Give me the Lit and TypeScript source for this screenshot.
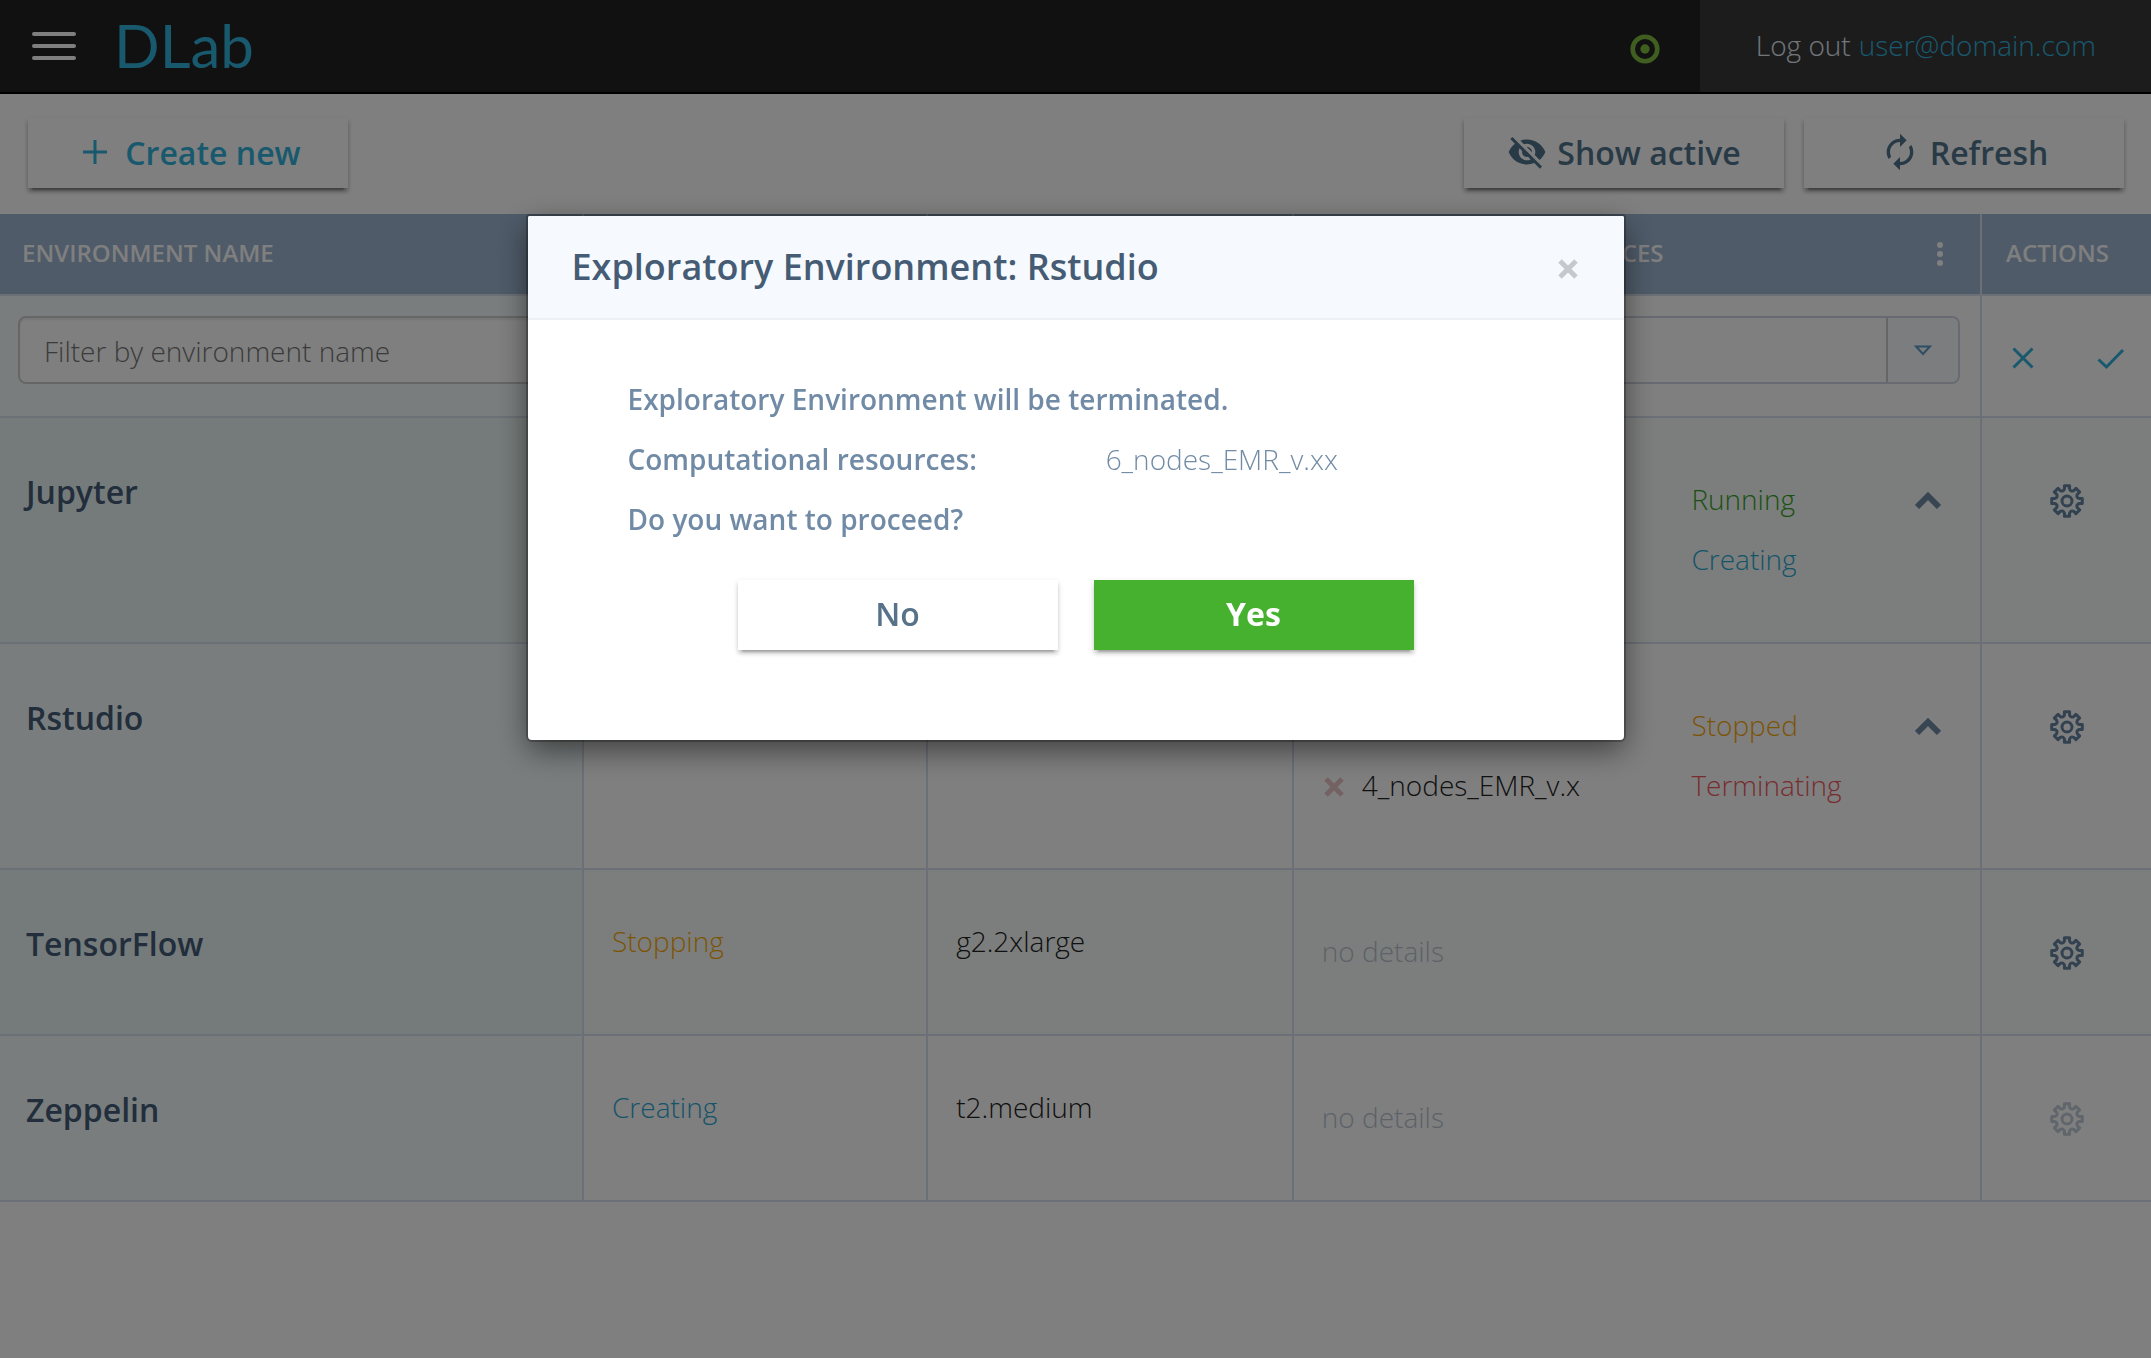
import { LitElement, html, css, svg, nothing } from "lit";
import { customElement, property } from "lit/decorators.js";
import { classMap } from "lit/directives/class-map.js";

type Status = "Running" | "Creating" | "Stopped" | "Stopping" | "Terminating";

interface Resource {
  name?: string;
  status: Status;
}

interface Environment {
  name: string;
  status?: Status;
  shape?: string;
  resources: Resource[];
  locked?: boolean;
}

const ENVIRONMENTS: Environment[] = [
  { name: "Jupyter", resources: [{ status: "Running" }, { status: "Creating" }] },
  {
    name: "Rstudio",
    resources: [{ status: "Stopped" }, { name: "4_nodes_EMR_v.x", status: "Terminating" }],
  },
  { name: "TensorFlow", status: "Stopping", shape: "g2.2xlarge", resources: [] },
  { name: "Zeppelin", status: "Creating", shape: "t2.medium", resources: [], locked: true },
];

/** Outline of an eight-toothed cog centred on the origin. */
function cogOutline(outer: number, inner: number): string {
  const at = (r: number, a: number) => `${(r * Math.cos(a)).toFixed(2)} ${(r * Math.sin(a)).toFixed(2)}`;
  const step = Math.PI / 4;
  let d = "";
  for (let k = 0; k < 8; k++) {
    const a = k * step;
    d += `${k ? "L" : "M"}${at(inner + 1, a - 0.2)}L${at(outer, a - 0.17)}L${at(outer, a + 0.17)}L${at(inner + 1, a + 0.2)}`;
    d += `Q${at(inner - 2, a + step / 2)} ${at(inner + 1, a + step - 0.2)}`;
  }
  return d + "Z";
}

const COG = cogOutline(15.5, 11.5);

const icons = {
  plus: svg`<path d="M12 0V24M0 12H24" fill="none" stroke="currentColor" stroke-width="3"/>`,
  eyeOff: svg`<path fill="currentColor" d="M12 7c2.76 0 5 2.24 5 5 0 .65-.13 1.26-.36 1.83l2.92 2.92c1.51-1.26 2.7-2.89 3.43-4.75-1.73-4.39-6-7.5-11-7.5-1.4 0-2.74.25-3.98.7l2.16 2.16C10.74 7.13 11.35 7 12 7zM2 4.27l2.28 2.28.46.46C3.08 8.3 1.78 10.02 1 12c1.73 4.39 6 7.5 11 7.5 1.55 0 3.03-.3 4.38-.84l.42.42L19.73 22 21 20.73 3.27 3 2 4.27zM7.53 9.8l1.55 1.55c-.05.21-.08.43-.08.65 0 1.66 1.34 3 3 3 .22 0 .44-.03.65-.08l1.55 1.55c-.67.33-1.41.53-2.2.53-2.76 0-5-2.24-5-5 0-.79.2-1.53.53-2.2zm4.31-.78l3.15 3.15.02-.16c0-1.66-1.34-3-3-3l-.17.01z"/>`,
  renew: svg`<path fill="currentColor" d="M12 6v3l4-4-4-4v3c-4.42 0-8 3.58-8 8 0 1.57.46 3.03 1.24 4.26L6.7 14.8c-.45-.83-.7-1.79-.7-2.8 0-3.31 2.69-6 6-6zm6.76 1.74L17.3 9.2c.44.84.7 1.79.7 2.8 0 3.31-2.69 6-6 6v-3l-4 4 4 4v-3c4.42 0 8-3.58 8-8 0-1.57-.46-3.03-1.24-4.26z"/>`,
};

@customElement("env-dialog")
export class EnvDialog extends LitElement {
  @property() environment = "";
  @property() resource = "";

  static styles = css`
    :host {
      display: block;
      box-sizing: border-box;
      width: 1096px;
      max-width: 92%;
      background: #fff;
      border-radius: 2px 2px 4px 4px;
      box-shadow: 0 0 0 2px rgba(0, 0, 0, 0.25), 0 10px 30px rgba(0, 0, 0, 0.5);
      color: #718ba6;
      font-size: 28px;
      line-height: 60px;
    }
    .head {
      display: flex;
      align-items: center;
      justify-content: space-between;
      padding: 26px 44px;
      background: #f6faff;
      border-bottom: 2px solid #edf1f6;
      border-radius: 2px 2px 0 0;
    }
    .title {
      margin: 0;
      font-size: 36px;
      font-weight: 600;
      line-height: 50px;
      color: #455c74;
    }
    .close {
      display: flex;
      padding: 4px 2px 0;
      border: 0;
      background: none;
      color: #c5c9cc;
    }
    .body {
      padding: 49px 96px 90px 100px;
    }
    .line {
      margin: 0;
      font-weight: 600;
    }
    .pair {
      display: grid;
      grid-template-columns: 17fr 15fr;
      margin: 0;
    }
    .term {
      font-weight: 600;
    }
    .value {
      margin: 0;
      font-weight: 300;
    }
    .choices {
      display: flex;
      justify-content: center;
      gap: 36px;
      padding: 31px 4px 0 0;
    }
    .choice {
      width: 320px;
      height: 70px;
      padding: 0 0 4px;
      border: 0;
      background: #fff;
      color: #577289;
      font: 600 32px "Open Sans", sans-serif;
      box-shadow: 0 6px 2px -4px rgba(0, 0, 0, 0.2), 0 4px 4px rgba(0, 0, 0, 0.14), 0 2px 6px rgba(0, 0, 0, 0.12);
    }
    .confirm {
      background: #45b12f;
      color: #fff;
      font-weight: 700;
    }
  `;

  render() {
    return html`
      <header class="head">
        <h2 class="title">Exploratory Environment: ${this.environment}</h2>
        <button class="close" aria-label="Close">
          <svg width="20" height="20" viewBox="0 0 20 20" aria-hidden="true">
            <path d="M2 2L18 18M18 2L2 18" stroke="currentColor" stroke-width="5" />
          </svg>
        </button>
      </header>
      <div class="body">
        <p class="line">Exploratory Environment will be terminated.</p>
        <dl class="pair">
          <dt class="term">Computational resources:</dt>
          <dd class="value">${this.resource}</dd>
        </dl>
        <p class="line">Do you want to proceed?</p>
        <div class="choices">
          <button class="choice">No</button>
          <button class="choice confirm">Yes</button>
        </div>
      </div>
    `;
  }
}

@customElement("env-table")
export class EnvTable extends LitElement {
  @property({ attribute: false }) environments: Environment[] = [];

  static styles = css`
    :host {
      display: block;
      font-size: 28px;
      font-weight: 300;
      line-height: 40px;
    }
    .grid {
      width: 100%;
      table-layout: fixed;
      border-collapse: separate;
      border-spacing: 0;
    }
    .c-name { width: 27.15%; }
    .c-status { width: 16%; }
    .c-shape { width: 17%; }
    .c-res { width: 32%; }
    .th,
    .td {
      box-sizing: border-box;
      border-right: 2px solid #d6e0ec;
      border-bottom: 2px solid #d6e0ec;
      text-align: left;
      vertical-align: top;
      padding: 0;
    }
    .th:last-child,
    .td:last-child {
      border-right: 0;
    }
    .th {
      padding: 19px 22px 21px;
      background: #9eb6d2;
      color: #fff;
      font-size: 24px;
      font-weight: 600;
    }
    .th:last-child {
      padding-left: 24px;
    }
    .split {
      display: flex;
      align-items: center;
      justify-content: space-between;
      white-space: nowrap;
    }
    .bare {
      display: flex;
      padding: 0;
      border: 0;
      background: none;
      color: inherit;
    }
    .menu {
      padding: 2px 14px 0 0;
    }
    .filter {
      padding: 20px 20px 32px 18px;
    }
    .first {
      background: #f2fafa;
    }
    .row:nth-child(odd) .td {
      background: #f9fdfa;
    }
    .row .name {
      background: #f2fafa;
    }
    .row:nth-child(odd) .name {
      background: #ebf6f4;
    }
    .box {
      box-sizing: border-box;
      width: 100%;
      height: 68px;
      padding: 2px 24px 0;
      border: 2px solid #ccc;
      border-radius: 8px;
      background: #fff;
      box-shadow: inset 0 2px 2px rgba(0, 0, 0, 0.08);
      color: #444;
      font: 300 28px "Open Sans", sans-serif;
    }
    .box::placeholder {
      color: #777;
      opacity: 1;
    }
    .pick {
      display: grid;
      grid-template-columns: 1fr 74px;
      align-items: stretch;
    }
    .select {
      grid-area: 1 / 1 / 2 / 3;
      appearance: none;
      border-color: #ced5e0;
      box-shadow: none;
    }
    .arrow {
      grid-area: 1 / 2 / 2 / 3;
      display: flex;
      align-items: center;
      justify-content: center;
      margin: 2px 2px 2px 0;
      border-left: 2px solid #ccc;
      border-radius: 0 6px 6px 0;
      background: #f6faff;
      color: #5b9cc9;
      pointer-events: none;
    }
    .apply {
      display: flex;
      justify-content: space-between;
      padding: 50px 26px 0 30px;
      color: #30b2dc;
    }
    .name {
      padding: 54px 24px 0 26px;
      color: #445c78;
      font-size: 32px;
      font-weight: 600;
      text-align: left;
    }
    .plain {
      padding: 51px 28px 0;
      color: #222;
    }
    .resources {
      padding: 51px 39px 53px 28px;
      line-height: 60px;
    }
    .res {
      display: grid;
      grid-template-columns: 40px 33fr 25fr;
      height: 60px;
      color: #222;
    }
    .mark {
      display: flex;
      align-items: center;
      padding-top: 4px;
      color: #e9c3c3;
    }
    .toggle {
      padding-top: 4px;
      color: #718ba6;
    }
    .empty {
      height: 60px;
      color: #b9c4d0;
    }
    .actions {
      padding-top: 65px;
      color: #6784a0;
    }
    .cog {
      margin: 0 auto;
    }
    .cog:disabled {
      opacity: 0.4;
    }
    .s-running { color: #35a326; }
    .s-creating { color: #2ba8d2; }
    .s-stopped,
    .s-stopping { color: #f8a90a; }
    .s-terminating { color: #ee5a60; }
  `;

  private status(status?: Status) {
    return status
      ? html`<span class=${classMap({ [`s-${status.toLowerCase()}`]: true })}>${status}</span>`
      : nothing;
  }

  private resource(item: Resource, index: number) {
    return html`
      <div class="res">
        <span class="mark">
          ${item.name
            ? html`<svg width="24" height="20" viewBox="0 0 24 20" aria-hidden="true">
                <path d="M4 2L20 18M20 2L4 18" stroke="currentColor" stroke-width="5" />
              </svg>`
            : nothing}
        </span>
        <span>${item.name ?? nothing}</span>
        <span class="split">
          ${this.status(item.status)}
          ${index === 0
            ? html`<button class="bare toggle" aria-label="Collapse resources">
                <svg width="26" height="18" viewBox="0 0 26 18" aria-hidden="true">
                  <path d="M2 15L13 4L24 15" fill="none" stroke="currentColor" stroke-width="6" />
                </svg>
              </button>`
            : nothing}
        </span>
      </div>
    `;
  }

  private row(env: Environment) {
    return html`
      <tr class="row">
        <th class="td name" scope="row">${env.name}</th>
        <td class="td plain">${this.status(env.status)}</td>
        <td class="td plain">${env.shape ?? nothing}</td>
        <td class="td resources">
          ${env.resources.length
            ? env.resources.map((item, i) => this.resource(item, i))
            : html`<div class="empty">no details</div>`}
        </td>
        <td class="td actions">
          <button class="bare cog" aria-label="Actions for ${env.name}" ?disabled=${env.locked}>
            <svg width="36" height="36" viewBox="-18 -18 36 36" aria-hidden="true">
              <path d=${COG} fill="none" stroke="currentColor" stroke-width="3" stroke-linejoin="round" />
              <circle r="5" fill="none" stroke="currentColor" stroke-width="3" />
            </svg>
          </button>
        </td>
      </tr>
    `;
  }

  render() {
    return html`
      <table class="grid">
        <colgroup>
          <col class="c-name" />
          <col class="c-status" />
          <col class="c-shape" />
          <col class="c-res" />
          <col />
        </colgroup>
        <thead>
          <tr>
            <th class="th" scope="col">ENVIRONMENT NAME</th>
            <td class="th"></td>
            <td class="th"></td>
            <th class="th" scope="col">
              <div class="split">
                COMPUTATIONAL RESOURCES
                <button class="bare menu" aria-label="Column menu">
                  <svg width="8" height="26" viewBox="0 0 8 26" fill="currentColor" aria-hidden="true">
                    <circle cx="4" cy="4" r="3" />
                    <circle cx="4" cy="13" r="3" />
                    <circle cx="4" cy="22" r="3" />
                  </svg>
                </button>
              </div>
            </th>
            <th class="th" scope="col">ACTIONS</th>
          </tr>
          <tr>
            <td class="td filter first">
              <input class="box" type="text" aria-label="Filter by environment name" placeholder="Filter by environment name" />
            </td>
            <td class="td"></td>
            <td class="td"></td>
            <td class="td filter">
              <div class="pick">
                <select class="box select" aria-label="Filter by resources"></select>
                <span class="arrow">
                  <svg width="18" height="12" viewBox="0 0 18 12" aria-hidden="true">
                    <path d="M2 2.5H16L9 10Z" fill="none" stroke="currentColor" stroke-width="2" />
                  </svg>
                </span>
              </div>
            </td>
            <td class="td">
              <div class="apply">
                <button class="bare" aria-label="Clear filter">
                  <svg width="22" height="24" viewBox="0 0 22 24" aria-hidden="true">
                    <path d="M1.5 2.5L20.5 21.5M20.5 2.5L1.5 21.5" stroke="currentColor" stroke-width="3" />
                  </svg>
                </button>
                <button class="bare" aria-label="Apply filter">
                  <svg width="28" height="24" viewBox="0 0 28 24" aria-hidden="true">
                    <path d="M1.5 13.5L9.5 21L26 4" fill="none" stroke="currentColor" stroke-width="3" />
                  </svg>
                </button>
              </div>
            </td>
          </tr>
        </thead>
        <tbody>
          ${this.environments.map((env) => this.row(env))}
        </tbody>
      </table>
    `;
  }
}

@customElement("app-root")
export class AppRoot extends LitElement {
  static styles = css`
    :host {
      display: block;
      min-height: 100vh;
      background: #fff;
      font-family: "Open Sans", sans-serif;
    }
    .bar {
      display: flex;
      align-items: stretch;
      height: 92px;
      background: #222;
      border-bottom: 2px solid #000;
      font-size: 28px;
      font-weight: 300;
    }
    .bare {
      display: flex;
      align-items: center;
      border: 0;
      background: none;
      color: #fff;
    }
    .burger {
      padding: 0 38px 0 32px;
    }
    .logo {
      color: #30b2dc;
      font-family: Lato, sans-serif;
      font-size: 60px;
      font-weight: 400;
      line-height: 90px;
    }
    .health {
      display: flex;
      align-items: center;
      margin-left: auto;
      padding: 6px 40px 0 0;
    }
    .account {
      display: flex;
      align-items: center;
      gap: 8px;
      padding: 0 55px 2px 56px;
      background: #393939;
      color: #e4ecf6;
    }
    .link {
      color: inherit;
      text-decoration: none;
    }
    .user {
      color: #30b2dc;
    }
    .tools {
      display: flex;
      gap: 20px;
      padding: 24px 27px 26px 28px;
    }
    .tool {
      display: flex;
      align-items: center;
      justify-content: center;
      gap: 10px;
      width: 320px;
      height: 70px;
      padding: 0 0 2px;
      border: 0;
      background: #fff;
      color: #52748e;
      font: 600 32px "Open Sans", sans-serif;
      box-shadow: 0 6px 2px -4px rgba(0, 0, 0, 0.3), 0 4px 4px rgba(0, 0, 0, 0.24), 0 2px 6px rgba(0, 0, 0, 0.12);
    }
    .create {
      gap: 18px;
      margin-right: auto;
      padding-left: 8px;
      color: #30b2dc;
    }
    .veil {
      position: fixed;
      inset: 0;
      display: flex;
      justify-content: center;
      align-items: flex-start;
      padding-top: 216px;
      background: rgba(0, 0, 0, 0.5);
    }
  `;

  render() {
    return html`
      <header class="bar">
        <button class="bare burger" aria-label="Menu">
          <svg width="44" height="28" viewBox="0 0 44 28" fill="currentColor" aria-hidden="true">
            <rect width="44" height="4" rx="2" />
            <rect y="12" width="44" height="4" rx="2" />
            <rect y="24" width="44" height="4" rx="2" />
          </svg>
        </button>
        <span class="logo">DLab</span>
        <span class="health" role="img" aria-label="Healthy">
          <svg width="30" height="30" viewBox="0 0 30 30" aria-hidden="true">
            <circle cx="15" cy="15" r="12.3" fill="none" stroke="#7fbc3f" stroke-width="4.6" />
            <circle cx="15" cy="15" r="4.7" fill="#7fbc3f" />
          </svg>
        </span>
        <div class="account">
          <a class="link" href="#logout">Log out</a>
          <a class="link user" href="#account">user@domain.com</a>
        </div>
      </header>
      <div class="tools">
        <button class="tool create">
          <svg width="24" height="24" viewBox="0 0 24 24" aria-hidden="true">${icons.plus}</svg>
          Create new
        </button>
        <button class="tool">
          <svg width="40" height="40" viewBox="0 0 24 24" aria-hidden="true">${icons.eyeOff}</svg>
          Show active
        </button>
        <button class="tool">
          <svg width="40" height="40" viewBox="0 0 24 24" aria-hidden="true">${icons.renew}</svg>
          Refresh
        </button>
      </div>
      <env-table .environments=${ENVIRONMENTS}></env-table>
      <div class="veil">
        <env-dialog
          role="dialog"
          aria-modal="true"
          aria-label="Exploratory Environment: Rstudio"
          environment="Rstudio"
          resource="6_nodes_EMR_v.xx"
        ></env-dialog>
      </div>
    `;
  }
}
